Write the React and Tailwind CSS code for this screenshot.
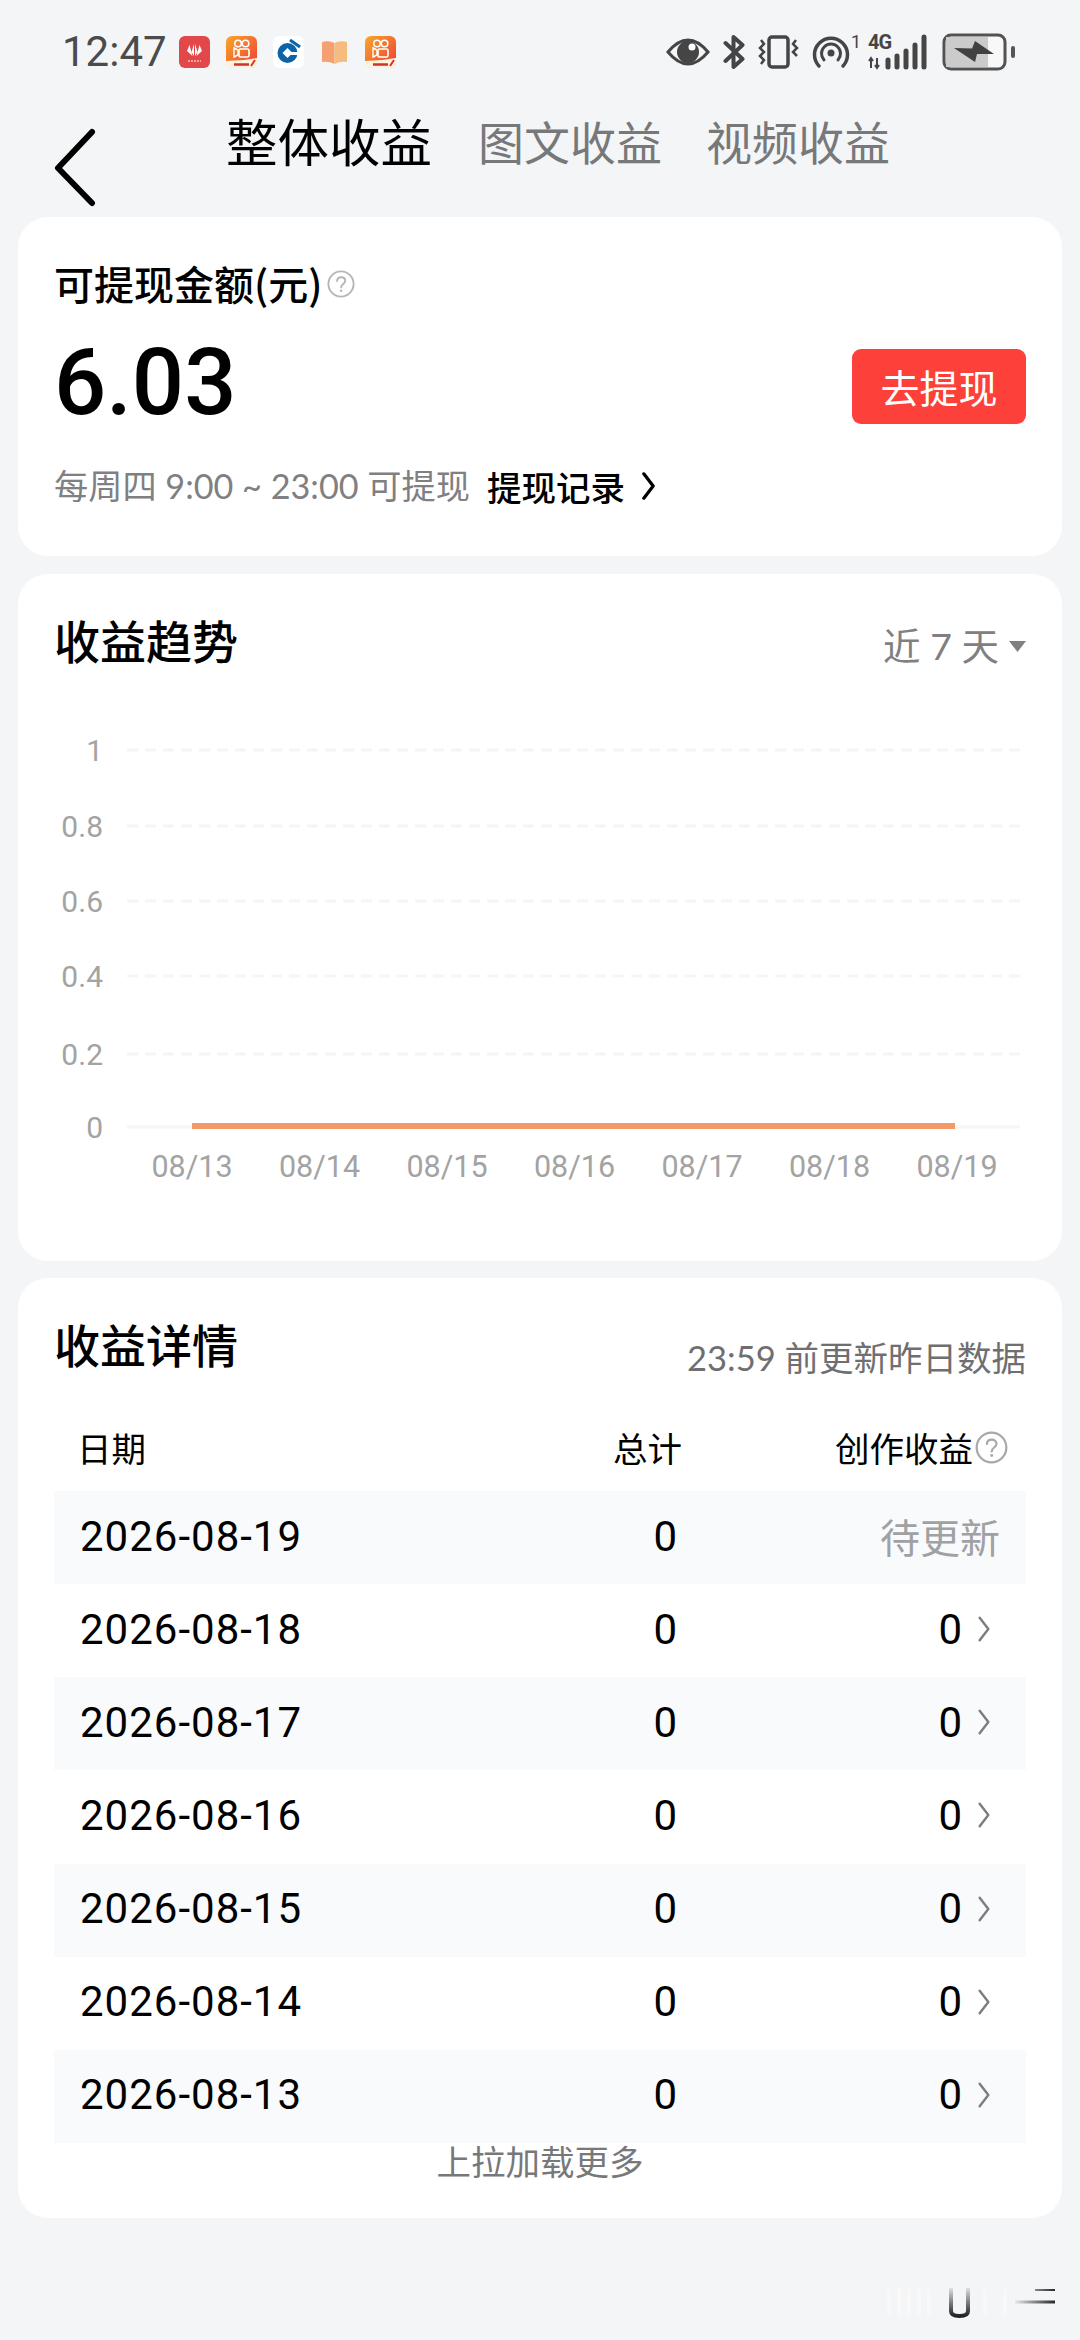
import React from "react";

function Chevron({ className, color = "#000", sw = 3 }) {
  return (
    <svg className={className} viewBox="0 0 14 30" fill="none">
      <path d="M2 2 L12 15 L2 28" stroke={color} strokeWidth={sw} strokeLinecap="round" strokeLinejoin="round" />
    </svg>
  );
}

function Help({ size, color, className }) {
  return (
    <svg className={className} width={size} height={size} viewBox="0 0 30 30" fill="none">
      <circle cx="15" cy="15" r="13.500" stroke={color} strokeWidth="2" />
      <path d="M10.800 11.800c.2-2.600 2-4 4.400-4 2.500 0 4.300 1.600 4.300 3.800 0 3.400-4.300 3.400-4.300 7" stroke={color} strokeWidth="2" strokeLinecap="round" />
      <circle cx="15.200" cy="22.300" r="1.300" fill={color} />
    </svg>
  );
}

function Kuaishou({ id }) {
  return (
    <svg width="31" height="32" viewBox="0 0 31 32">
      <defs>
        <linearGradient id={id} x1="0" y1="0" x2="1" y2="1">
          <stop offset="0" stopColor="#f9a82a" />
          <stop offset="1" stopColor="#ec3a38" />
        </linearGradient>
      </defs>
      <rect width="31" height="32" rx="6" fill={`url(#${id})`} />
      <circle cx="12" cy="7.500" r="3.300" fill="none" stroke="#fff" strokeWidth="1.600" />
      <circle cx="19.500" cy="7.500" r="3.300" fill="none" stroke="#fff" strokeWidth="1.600" />
      <rect x="13" y="13" width="10" height="8" rx="1.500" fill="none" stroke="#fff" strokeWidth="1.600" />
      <path d="M12 14 L8 12 V21 L12 19 Z" fill="none" stroke="#fff" strokeWidth="1.400" />
      <path d="M0 25 Q16 25 31 22 V27 Q31 32 25 32 H6 Q0 32 0 27 Z" fill="#fff3dd" />
      <path d="M8 28.500 H23" stroke="#c9352e" strokeWidth="2.500" />
      <path d="M25 30 L29 24" stroke="#d8322d" strokeWidth="2" />
    </svg>
  );
}

function StatusBar() {
  return (
    <div className="h-[70px] pt-[33px] flex items-start pl-[62px] pr-[65px] justify-between">
      <div className="flex items-center h-[38px]">
        <span className="w-[117px] text-[42px] leading-[38px] text-[#4b4b4d] font-['Roboto',sans-serif]">12:47</span>
        <div className="flex items-center gap-[16px]">
          <svg width="31" height="32" viewBox="0 0 31 32">
            <rect width="31" height="32" rx="6" fill="#e2474a" />
            <path d="M15 8 L12.500 16 L15 20 Z M16 8 L18.500 16 L16 20 Z M10.500 9 L8 15 L13.500 20 Z M20.500 9 L23 15 L17.500 20 Z" fill="#fff" />
            <path d="M9 25 H22" stroke="#fff" strokeWidth="1" strokeDasharray="2 1" />
          </svg>
          <Kuaishou id="ks1" />
          <svg width="31" height="32" viewBox="0 0 31 32">
            <rect width="31" height="32" rx="6" fill="#fff" />
            <circle cx="14.500" cy="17" r="10" fill="#0c63a8" />
            <path d="M14.500 12 L19.500 17 L14.500 22 L9.500 17 Z" fill="#fff" />
            <path d="M17 16 H27 V19 H17 Z" fill="#fff" />
            <path d="M17 4 L27 11" stroke="#0c63a8" strokeWidth="3" />
          </svg>
          <svg className="ml-[2px]" width="25" height="24" viewBox="0 0 25 24">
            <path d="M0 2 Q7 0 12.500 3 V24 Q7 21 0 22 Z" fill="#f4a071" />
            <path d="M25 2 Q18 0 12.500 3 V24 Q18 21 25 22 Z" fill="#f6bb7e" />
          </svg>
          <div className="ml-[2px]"><Kuaishou id="ks2" /></div>
        </div>
      </div>
      <div className="flex items-center h-[38px] text-[#454545]">
        <svg width="44" height="32" viewBox="0 0 44 32" fill="none">
          <path d="M2 16 Q22 -8 42 16 Q22 40 2 16 Z" stroke="#454545" strokeWidth="3" />
          <circle cx="22" cy="16" r="11" fill="#454545" />
          <circle cx="26" cy="11" r="3.500" fill="#fff" />
        </svg>
        <svg className="ml-[13px]" width="22" height="36" viewBox="0 0 21 36" fill="none">
          <path d="M2 9 L19 25 L10 33 V3 L19 11 L2 27" stroke="#454545" strokeWidth="4" strokeLinejoin="round" strokeLinecap="round" />
        </svg>
        <svg className="ml-[12px]" width="43" height="34" viewBox="0 0 41 34" fill="none">
          <rect x="11" y="2" width="19" height="30" rx="3" stroke="#454545" strokeWidth="3.500" />
          <path d="M3 5 L6 9 L2 13 L6 17 L2 21 L6 25 L3 29 M38 5 L35 9 L39 13 L35 17 L39 21" stroke="#454545" strokeWidth="2.500" />
        </svg>
        <svg className="ml-[12px]" width="38" height="34" viewBox="0 0 38 34" fill="none">
          <path d="M7 31 A16.500 16.500 0 1 1 31 31" stroke="#454545" strokeWidth="3.500" strokeLinecap="round" />
          <path d="M12 25 A9.500 9.500 0 1 1 26 25" stroke="#454545" strokeWidth="3" strokeLinecap="round" />
          <circle cx="19" cy="18" r="3.500" fill="#454545" />
        </svg>
        <span className="self-start -mt-[2px] w-[18px] pl-[1px] text-[18px] leading-[22px] font-['Roboto',sans-serif]">1</span>
        <div className="relative w-[62px] h-[36px]">
          <span className="absolute left-0 -top-[2px] text-[20px] leading-[20px] font-bold tracking-[-1px] font-['Roboto',sans-serif]">4G</span>
          <svg className="absolute left-0 top-0" width="62" height="36" viewBox="0 0 62 36" fill="none">
            <path d="M3 24 V34 M1 27 L3 24 L5 27 M9 24 V34 M7 31 L9 34 L11 31" stroke="#454545" strokeWidth="2" />
            <path d="M20 26 V33 M29 22 V33 M38 17 V33 M47 11 V33 M56 3 V33" stroke="#454545" strokeWidth="5" strokeLinecap="round" />
          </svg>
        </div>
        <svg className="ml-[12px]" width="73" height="38" viewBox="0 0 73 38" fill="none">
          <rect x="2" y="2" width="61" height="34" rx="7" fill="#f8f8f8" stroke="#525252" strokeWidth="3" />
          <path d="M4 4 H46 V34 H4 Z" fill="#cbcbcb" />
          <path d="M12 15 L30 15.500 L33 8 L52 21 L35 21 L33 29 Z" fill="#414141" />
          <rect x="69" y="13" width="4" height="12" rx="2" fill="#555" />
        </svg>
      </div>
    </div>
  );
}

function Header() {
  return (
    <div className="h-[117px] relative flex pl-[226px] pt-[40px]">
      <svg className="absolute left-[54px] top-[57px]" width="44" height="80" viewBox="0 0 44 80" fill="none">
        <path d="M38 5 L4 41 L38 76" stroke="#000" strokeWidth="6" strokeLinecap="round" strokeLinejoin="round" />
      </svg>
      <span className="text-[51.500px] leading-[60px] text-black w-[252px]">整体收益</span>
      <span className="text-[46px] leading-[60px] text-[#77787a] w-[228px]">图文收益</span>
      <span className="text-[46px] leading-[60px] text-[#77787a]">视频收益</span>
    </div>
  );
}

function Card({ children, className }) {
  return <div className={`bg-white rounded-[30px] mx-[18px] ${className}`}>{children}</div>;
}

function Balance() {
  return (
    <Card className="h-[339px] pt-[42px] px-[36px]">
      <div className="flex items-center h-[48px]">
        <span className="text-[40px] leading-[48px] font-medium text-black">可提现金额(元)</span>
        <Help className="ml-[5px] mt-[2px]" size={28} color="#b5b5b5" />
      </div>
      <div className="flex items-center justify-between h-[76px] mt-[42px]">
        <span className="text-[92px] leading-[76px] -mt-[8px] font-medium text-black font-['Roboto',sans-serif]">6.03</span>
        <div className="w-[174px] h-[75px] -mt-[2px] rounded-[9px] bg-[#fd4039] flex items-center justify-center text-white text-[39px]">去提现</div>
      </div>
      <div className="flex items-center h-[44px] mt-[39px]">
        <span className="text-[#808082] text-[34.200px] leading-[44px] w-[433px] font-['Lato','Noto_Sans_CJK_SC',sans-serif]">每周四 9:00 ~ 23:00 可提现</span>
        <span className="text-black font-medium text-[34.500px] leading-[44px]">提现记录</span>
        <Chevron className="w-[15px] h-[28px] ml-[16px]" sw={3.500} />
      </div>
    </Card>
  );
}

const yLabels = [["1", 750], ["0.8", 826], ["0.6", 901], ["0.4", 976], ["0.2", 1054], ["0", 1127]];
const xLabels = ["08/13", "08/14", "08/15", "08/16", "08/17", "08/18", "08/19"];

function Trend() {
  return (
    <Card className="h-[687px] mt-[18px] pt-[35px]">
      <div className="flex justify-between px-[36px] h-[61px]">
        <span className="text-[46px] leading-[60px] font-medium text-black">收益趋势</span>
        <span className="flex items-center mt-[7px] h-[60px]">
          <span className="text-[37.500px] leading-[60px] text-[#808082] font-['Lato','Noto_Sans_CJK_SC',sans-serif]">近 7 天</span>
          <svg className="ml-[10px]" width="17" height="11" viewBox="0 0 17 11"><path d="M0 0 H17 L8.500 11 Z" fill="#808082" /></svg>
        </span>
      </div>
      <svg className="block" width="1044" height="590" viewBox="0 0 1044 590" style={{ fontFamily: "Roboto, sans-serif" }}>
        {yLabels.map(([t, y], i) => {
          const yy = y - 670;
          return (
            <g key={t}>
              <text x="85" y={yy + 11} textAnchor="end" fontSize="30" fill="#a3a3a3">{t}</text>
              <line x1="109" x2="1002" y1={yy} y2={yy} stroke="#f5f5f5" strokeWidth="3" strokeDasharray={i === 5 ? "0" : "11 7"} />
            </g>
          );
        })}
        <line x1="174" x2="937" y1="456" y2="456" stroke="#f39a68" strokeWidth="6" />
        {xLabels.map((t, i) => (
          <text key={t} x={174 + i * 127.500} y="507" textAnchor="middle" fontSize="30.500" fill="#a3a3a3">{t}</text>
        ))}
      </svg>
    </Card>
  );
}

const rows = ["2026-08-19", "2026-08-18", "2026-08-17", "2026-08-16", "2026-08-15", "2026-08-14", "2026-08-13"];

function Details() {
  return (
    <Card className="h-[940px] mt-[17px] pt-[35px] px-[36px]">
      <div className="flex justify-between h-[61px]">
        <span className="text-[46px] leading-[60px] font-medium text-black">收益详情</span>
        <span className="text-[34.500px] leading-[44px] mt-[23px] text-[#6f6f71] font-['Lato','Noto_Sans_CJK_SC',sans-serif]">23:59 前更新昨日数据</span>
      </div>
      <div className="flex items-center h-[88px] mt-[29px] text-[34.500px] leading-[44px] text-black pl-[23px] pr-[18px]">
        <span className="flex-1">日期</span>
        <span className="mr-[153px]">总计</span>
        <span>创作收益</span>
        <Help size={33} color="#a8a8a8" className="ml-[2px]" />
      </div>
      <div>
        {rows.map((d, i) => (
          <div key={d} className={`flex items-center h-[93.150px] pl-[26px] pr-[26px] pb-[3px] text-[42px] tracking-[1px] text-black font-['Roboto',sans-serif] ${i % 2 === 0 ? "bg-[#f9fafc]" : "bg-white"}`}>
            <span className="flex-1">{d}</span>
            <span className="w-[60px] text-right">0</span>
            {i === 0 ? (
              <span className="w-[322px] text-right text-[40px] tracking-normal text-[#a0a1a3] font-['Noto_Sans_CJK_SC',sans-serif]">待更新</span>
            ) : (
              <span className="w-[322px] flex items-center justify-end">
                <span>0</span>
                <span className="w-[37px] pl-[14px]">
                  <Chevron className="w-[14px] h-[26px]" color="#7d7d7d" sw={2.800} />
                </span>
              </span>
            )}
          </div>
        ))}
      </div>
      <div className="text-center text-[34.500px] leading-[36px] -mt-[1px] text-[#77787a]">上拉加载更多</div>
    </Card>
  );
}

function Watermark() {
  return (
    <div className="flex justify-end pr-[24px] mt-[67px]">
      <svg width="171" height="34" viewBox="0 0 171 34" fill="none">
        <defs>
          <linearGradient id="um" x1="0" y1="0" x2="0" y2="1">
            <stop offset="0" stopColor="#e0e0e0" />
            <stop offset="1" stopColor="#222" />
          </linearGradient>
          <linearGradient id="dash" gradientUnits="userSpaceOnUse" x1="128" y1="0" x2="171" y2="0">
            <stop offset="0" stopColor="#f0f0f0" />
            <stop offset="1" stopColor="#222" />
          </linearGradient>
        </defs>
        <path d="M4 4 V30 M14 2 V30 M24 4 V30 M34 2 V30 M44 4 V30 M100 4 V30 M120 4 V30" stroke="#f8f8f9" strokeWidth="4" />
        <path d="M66 3 V26 Q66 31 74.500 31 Q83 31 83 26 V3" stroke="url(#um)" strokeWidth="4" />
        <path d="M130 17 H170" stroke="url(#dash)" strokeWidth="3" />
        <path d="M150 5 H170" stroke="url(#dash)" strokeWidth="2" />
      </svg>
    </div>
  );
}

export default function App() {
  return (
    <div className="w-[1080px] h-[2340px] overflow-hidden bg-[#f4f5f7] font-['Noto_Sans_CJK_SC',sans-serif]">
      <StatusBar />
      <Header />
      <div className="pt-[30px]">
        <Balance />
        <Trend />
        <Details />
        <Watermark />
      </div>
    </div>
  );
}
